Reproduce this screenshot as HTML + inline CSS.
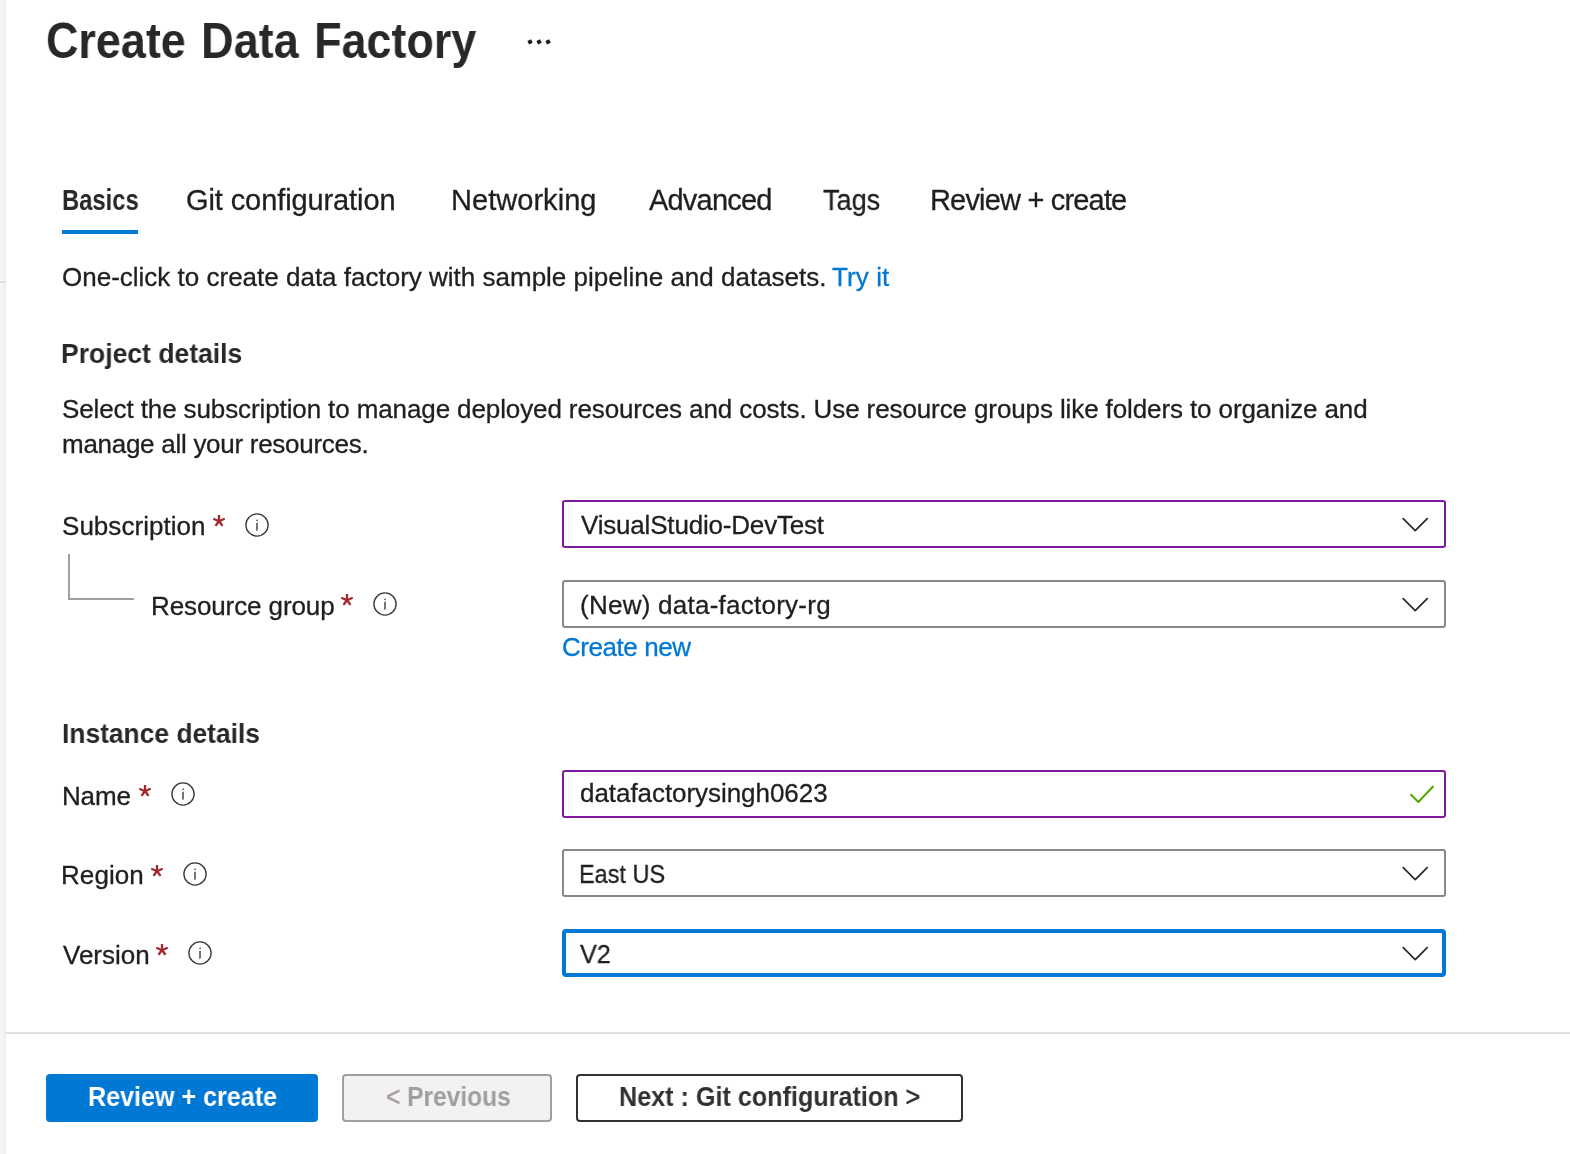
<!DOCTYPE html>
<html>
<head>
<meta charset="utf-8">
<style>
html,body{margin:0;padding:0;background:#fff;}
body{width:1570px;height:1154px;overflow:hidden;position:relative;font-family:"Liberation Sans",sans-serif;color:#323130;}
.a{position:absolute;white-space:nowrap;line-height:1;will-change:transform;}
.info{position:absolute;width:24px;height:24px;}
.ast{position:absolute;width:12px;height:12px;}
.chev{position:absolute;width:27px;height:15px;}
.box{position:absolute;left:562px;width:884px;height:48px;box-sizing:border-box;border:2px solid #8a8886;border-radius:3px;background:#fff;}
.box.p{border-color:#80189a;}
.box.f{border:4px solid #0078d4;border-radius:4px;}
.btn{position:absolute;top:1074px;height:48px;box-sizing:border-box;border-radius:4px;}
</style>
</head>
<body>
<div class="a" style="left:0;top:0;width:6px;height:1154px;background:linear-gradient(to right,#f5f5f5 0,#f5f5f5 2px,#f2f2f2 3px,#efefef 5px,#efefef 6px);"></div>
<div class="a" style="left:0;top:281px;width:6px;height:2px;background:#e1dfdd;"></div>
<div class="a" style="left:45.7px;top:16px;font-size:50px;font-weight:700;transform:scaleX(0.8983);transform-origin:0 0;word-spacing:3.3px;color:#292827;">Create Data Factory</div>
<div class="a" style="left:528px;top:40px;width:3.6px;height:3.6px;background:#1a1a1a;transform:rotate(-25deg);"></div>
<div class="a" style="left:537px;top:40px;width:3.6px;height:3.6px;background:#1a1a1a;transform:rotate(-25deg);"></div>
<div class="a" style="left:546px;top:40px;width:3.6px;height:3.6px;background:#1a1a1a;transform:rotate(-25deg);"></div>
<div class="a" style="left:61.8px;top:186px;font-size:29px;font-weight:700;transform:scaleX(0.8198);transform-origin:0 0;color:#292827;">Basics</div>
<div class="a" style="left:186.0px;top:186px;font-size:29px;font-weight:400;letter-spacing:-0.1px;-webkit-text-stroke:0.3px #201f1e;color:#201f1e;">Git configuration</div>
<div class="a" style="left:450.6px;top:186px;font-size:29px;font-weight:400;letter-spacing:0.044px;-webkit-text-stroke:0.3px #201f1e;color:#201f1e;">Networking</div>
<div class="a" style="left:649.2px;top:186px;font-size:29px;font-weight:400;letter-spacing:-0.8px;-webkit-text-stroke:0.3px #201f1e;color:#201f1e;">Advanced</div>
<div class="a" style="left:823.0px;top:186px;font-size:29px;font-weight:400;transform:scaleX(0.9328);transform-origin:0 0;-webkit-text-stroke:0.3px #201f1e;color:#201f1e;">Tags</div>
<div class="a" style="left:929.5px;top:186px;font-size:29px;font-weight:400;letter-spacing:-0.821px;-webkit-text-stroke:0.3px #201f1e;color:#201f1e;">Review + create</div>
<div class="a" style="left:62px;top:230px;width:76px;height:4px;background:#0078d4;"></div>
<div class="a" style="left:61.5px;top:264px;font-size:26px;font-weight:400;-webkit-text-stroke:0.3px #201f1e;color:#201f1e;">One-click to create data factory with sample pipeline and datasets.</div>
<div class="a" style="left:831.5px;top:264px;font-size:26px;font-weight:400;letter-spacing:0.1px;-webkit-text-stroke:0.3px #0078d4;color:#0078d4;">Try it</div>
<div class="a" style="left:61.1px;top:340px;font-size:28px;font-weight:700;transform:scaleX(0.9471);transform-origin:0 0;color:#292827;">Project details</div>
<div class="a" style="left:62.0px;top:396px;font-size:26px;font-weight:400;letter-spacing:-0.112px;-webkit-text-stroke:0.3px #201f1e;color:#201f1e;">Select the subscription to manage deployed resources and costs. Use resource groups like folders to organize and</div>
<div class="a" style="left:62.4px;top:431px;font-size:26px;font-weight:400;letter-spacing:-0.276px;-webkit-text-stroke:0.3px #201f1e;color:#201f1e;">manage all your resources.</div>
<div class="box p" style="top:500px;"></div>
<div class="box" style="top:580px;"></div>
<div class="box p" style="top:770px;"></div>
<div class="box" style="top:849px;"></div>
<div class="box f" style="top:929px;"></div>
<div class="a" style="left:62.0px;top:513px;font-size:26px;font-weight:400;letter-spacing:0.036px;-webkit-text-stroke:0.3px #201f1e;color:#201f1e;">Subscription</div>
<svg class="ast" style="left:213px;top:515.2px;" viewBox="0 0 12 12"><g stroke="#a4262c" stroke-width="2.3"><line x1="6" y1="6" x2="6" y2="0"/><line x1="6" y1="6.3" x2="11.7" y2="3.7"/><line x1="6" y1="6" x2="9.5" y2="10.85"/><line x1="6" y1="6" x2="2.5" y2="10.85"/><line x1="6" y1="6.3" x2="0.3" y2="3.7"/></g></svg>
<svg class="info" style="left:245px;top:513px;" viewBox="0 0 24 24"><circle cx="12" cy="12" r="11.1" fill="none" stroke="#3b3a39" stroke-width="1.35"/><path d="M11.15,8 L12.85,8 L12.85,6.2 L11.15,6.9 Z M11.15,10.1 L12.85,9.4 L12.85,17.2 L11.15,17.9 Z" fill="#5f5d5b"/></svg>
<div class="a" style="left:68px;top:554px;width:2px;height:46px;background:#a19f9d;"></div>
<div class="a" style="left:68px;top:598px;width:66px;height:2px;background:#a19f9d;"></div>
<div class="a" style="left:151.4px;top:593px;font-size:26px;font-weight:400;letter-spacing:-0.108px;-webkit-text-stroke:0.3px #201f1e;color:#201f1e;">Resource group</div>
<svg class="ast" style="left:341px;top:594.2px;" viewBox="0 0 12 12"><g stroke="#a4262c" stroke-width="2.3"><line x1="6" y1="6" x2="6" y2="0"/><line x1="6" y1="6.3" x2="11.7" y2="3.7"/><line x1="6" y1="6" x2="9.5" y2="10.85"/><line x1="6" y1="6" x2="2.5" y2="10.85"/><line x1="6" y1="6.3" x2="0.3" y2="3.7"/></g></svg>
<svg class="info" style="left:373px;top:592px;" viewBox="0 0 24 24"><circle cx="12" cy="12" r="11.1" fill="none" stroke="#3b3a39" stroke-width="1.35"/><path d="M11.15,8 L12.85,8 L12.85,6.2 L11.15,6.9 Z M11.15,10.1 L12.85,9.4 L12.85,17.2 L11.15,17.9 Z" fill="#5f5d5b"/></svg>
<div class="a" style="left:580.6px;top:512px;font-size:26px;font-weight:400;letter-spacing:-0.189px;-webkit-text-stroke:0.3px #201f1e;color:#201f1e;">VisualStudio-DevTest</div>
<svg class="chev" style="left:1402px;top:517px;" viewBox="0 0 27 15"><polyline points="1.2,1.6 13.2,13.6 25.2,1.6" fill="none" stroke="#292827" stroke-width="1.7" stroke-linecap="round" stroke-linejoin="round"/></svg>
<div class="a" style="left:580.0px;top:592px;font-size:26px;font-weight:400;letter-spacing:0.25px;-webkit-text-stroke:0.3px #201f1e;color:#201f1e;">(New) data-factory-rg</div>
<svg class="chev" style="left:1402px;top:597px;" viewBox="0 0 27 15"><polyline points="1.2,1.6 13.2,13.6 25.2,1.6" fill="none" stroke="#292827" stroke-width="1.7" stroke-linecap="round" stroke-linejoin="round"/></svg>
<div class="a" style="left:562.0px;top:634px;font-size:26px;font-weight:400;letter-spacing:-0.444px;-webkit-text-stroke:0.3px #0078d4;color:#0078d4;">Create new</div>
<div class="a" style="left:62.1px;top:720px;font-size:28px;font-weight:700;transform:scaleX(0.942);transform-origin:0 0;color:#292827;">Instance details</div>
<div class="a" style="left:62.0px;top:783px;font-size:26px;font-weight:400;letter-spacing:-0.167px;-webkit-text-stroke:0.3px #201f1e;color:#201f1e;">Name</div>
<svg class="ast" style="left:139px;top:785px;" viewBox="0 0 12 12"><g stroke="#a4262c" stroke-width="2.3"><line x1="6" y1="6" x2="6" y2="0"/><line x1="6" y1="6.3" x2="11.7" y2="3.7"/><line x1="6" y1="6" x2="9.5" y2="10.85"/><line x1="6" y1="6" x2="2.5" y2="10.85"/><line x1="6" y1="6.3" x2="0.3" y2="3.7"/></g></svg>
<svg class="info" style="left:171px;top:782px;" viewBox="0 0 24 24"><circle cx="12" cy="12" r="11.1" fill="none" stroke="#3b3a39" stroke-width="1.35"/><path d="M11.15,8 L12.85,8 L12.85,6.2 L11.15,6.9 Z M11.15,10.1 L12.85,9.4 L12.85,17.2 L11.15,17.9 Z" fill="#5f5d5b"/></svg>
<div class="a" style="left:580.0px;top:780px;font-size:26px;font-weight:400;letter-spacing:-0.053px;-webkit-text-stroke:0.3px #201f1e;color:#201f1e;">datafactorysingh0623</div>
<svg class="a" style="left:1409px;top:784px;width:26px;height:19px;" viewBox="0 0 26 19"><polyline points="1.5,10.3 9.4,18 24.5,2" fill="none" stroke="#57a300" stroke-width="2"/></svg>
<div class="a" style="left:61.2px;top:862px;font-size:26px;font-weight:400;letter-spacing:0.08px;-webkit-text-stroke:0.3px #201f1e;color:#201f1e;">Region</div>
<svg class="ast" style="left:151px;top:865px;" viewBox="0 0 12 12"><g stroke="#a4262c" stroke-width="2.3"><line x1="6" y1="6" x2="6" y2="0"/><line x1="6" y1="6.3" x2="11.7" y2="3.7"/><line x1="6" y1="6" x2="9.5" y2="10.85"/><line x1="6" y1="6" x2="2.5" y2="10.85"/><line x1="6" y1="6.3" x2="0.3" y2="3.7"/></g></svg>
<svg class="info" style="left:183px;top:862px;" viewBox="0 0 24 24"><circle cx="12" cy="12" r="11.1" fill="none" stroke="#3b3a39" stroke-width="1.35"/><path d="M11.15,8 L12.85,8 L12.85,6.2 L11.15,6.9 Z M11.15,10.1 L12.85,9.4 L12.85,17.2 L11.15,17.9 Z" fill="#5f5d5b"/></svg>
<div class="a" style="left:579.2px;top:861px;font-size:26px;font-weight:400;transform:scaleX(0.9032);transform-origin:0 0;-webkit-text-stroke:0.3px #201f1e;color:#201f1e;">East US</div>
<svg class="chev" style="left:1402px;top:866px;" viewBox="0 0 27 15"><polyline points="1.2,1.6 13.2,13.6 25.2,1.6" fill="none" stroke="#292827" stroke-width="1.7" stroke-linecap="round" stroke-linejoin="round"/></svg>
<div class="a" style="left:63.0px;top:942px;font-size:26px;font-weight:400;-webkit-text-stroke:0.3px #201f1e;color:#201f1e;">Version</div>
<svg class="ast" style="left:156px;top:943.7px;" viewBox="0 0 12 12"><g stroke="#a4262c" stroke-width="2.3"><line x1="6" y1="6" x2="6" y2="0"/><line x1="6" y1="6.3" x2="11.7" y2="3.7"/><line x1="6" y1="6" x2="9.5" y2="10.85"/><line x1="6" y1="6" x2="2.5" y2="10.85"/><line x1="6" y1="6.3" x2="0.3" y2="3.7"/></g></svg>
<svg class="info" style="left:188px;top:941px;" viewBox="0 0 24 24"><circle cx="12" cy="12" r="11.1" fill="none" stroke="#3b3a39" stroke-width="1.35"/><path d="M11.15,8 L12.85,8 L12.85,6.2 L11.15,6.9 Z M11.15,10.1 L12.85,9.4 L12.85,17.2 L11.15,17.9 Z" fill="#5f5d5b"/></svg>
<div class="a" style="left:580.3px;top:941px;font-size:26px;font-weight:400;transform:scaleX(0.971);transform-origin:0 0;-webkit-text-stroke:0.3px #201f1e;color:#201f1e;">V2</div>
<svg class="chev" style="left:1402px;top:946px;" viewBox="0 0 27 15"><polyline points="1.2,1.6 13.2,13.6 25.2,1.6" fill="none" stroke="#292827" stroke-width="1.7" stroke-linecap="round" stroke-linejoin="round"/></svg>
<div class="a" style="left:6px;top:1032px;width:1564px;height:2px;background:#e1dfdd;"></div>
<div class="btn" style="left:46px;width:272px;background:#0078d4;"></div>
<div class="btn" style="left:342px;width:210px;background:#f3f2f1;border:2px solid #a19f9d;"></div>
<div class="btn" style="left:576px;width:387px;background:#fff;border:2px solid #323130;"></div>
<div class="a" style="left:88.3px;top:1084px;font-size:27px;font-weight:700;transform:scaleX(0.9297);transform-origin:0 0;color:#ffffff;">Review + create</div>
<div class="a" style="left:386.1px;top:1084px;font-size:27px;font-weight:700;transform:scaleX(0.9088);transform-origin:0 0;color:#a19f9d;"><span style='font-weight:400;-webkit-text-stroke:0.6px #a19f9d'>&lt;</span> Previous</div>
<div class="a" style="left:618.5px;top:1084px;font-size:27px;font-weight:700;transform:scaleX(0.932);transform-origin:0 0;color:#323130;">Next : Git configuration <span style='font-weight:400;-webkit-text-stroke:0.6px #323130'>&gt;</span></div>
</body>
</html>
